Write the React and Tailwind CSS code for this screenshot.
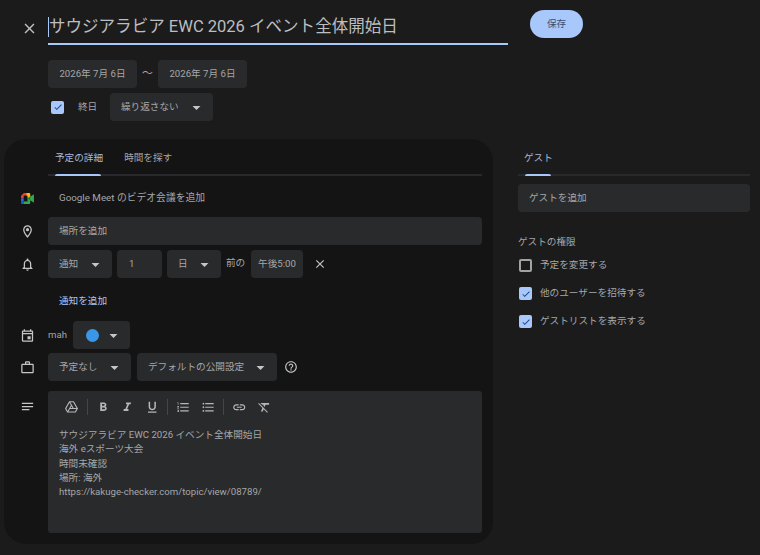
import React from "react";
import {
  MdClose, MdOutlineLocationOn, MdOutlineNotifications, MdOutlineEvent, MdOutlineWorkOutline, MdNotes,
  MdHelpOutline, MdFormatBold, MdFormatItalic, MdFormatUnderlined, MdFormatListNumbered, MdFormatListBulleted,
  MdLink, MdFormatClear, MdCheck, MdArrowDropDown,
} from "react-icons/md";

const font = { fontFamily: '"Roboto","Noto Sans CJK JP",sans-serif' };

function Box({ className = "", children }) {
  return <div className={`h-7 flex items-center rounded-[4px] bg-[#292a2c] text-[#a5a7a9] text-[9.65px] shrink-0 ${className}`}>{children}</div>;
}
function Select({ w, label, pl = "pl-[11px]" }) {
  return (
    <Box className={`${w} ${pl} justify-between pr-[7px]`}>
      <span>{label}</span>
      <MdArrowDropDown className="text-[19px] text-[#c4c6c8]" />
    </Box>
  );
}
function Check({ on }) {
  return on ? (
    <div className="w-[13px] h-[13px] rounded-[2px] bg-[#a8c7fa] flex items-center justify-center shrink-0">
      <MdCheck className="text-[10px] text-[#1c3d80]" />
    </div>
  ) : (
    <div className="w-[13px] h-[13px] rounded-[2px] border-2 border-[#a0a2a4] shrink-0" />
  );
}
function Meet() {
  return (
    <svg width="13" height="11" viewBox="0 0 14 12">
      <path d="M3 0h6v3H3v3H0V3z" fill="#ea4335" />
      <path d="M0 6h3v3H0z" fill="#1a73e8" />
      <path d="M0 9h3v3H1.2A1.2 1.2 0 0 1 0 10.8z" fill="#1967d2" />
      <path d="M3 9h6v3H3z" fill="#34a853" />
      <path d="M6 0h2.8A1.2 1.2 0 0 1 10 1.2V4.5L6 6z" fill="#fbbc04" />
      <path d="M3 3h4v6H3z" fill="#141414" />
      <path d="M7 6l3-2.6V1.5L10 4l4-2.6v9.2L10 8v2.8A1.2 1.2 0 0 1 8.8 12H8V9H7z" fill="#34a853" />
      <path d="M7 6l3-2v4z" fill="#188038" />
    </svg>
  );
}
function Row({ icon, className = "", children }) {
  return (
    <div className={`flex items-center ${className}`}>
      <div className="w-[44px] shrink-0 flex justify-center pl-[2px] text-[#c4c6c8] text-[15px]">{icon}</div>
      {children}
    </div>
  );
}
function Drive() {
  return (
    <svg width="15" height="14" viewBox="0 0 24 24" fill="none" stroke="#b5b7b9" strokeWidth="2" strokeLinejoin="round">
      <path d="M8.6 3h6.8L22 14.5 18.7 20.5H5.3L2 14.5z" />
      <path d="M8.6 3l6.6 11.5H22M5.3 20.5l6.7-11.5M8.5 14.5h6.7" strokeWidth="1.8" />
    </svg>
  );
}
function Tb({ children, className = "" }) {
  return <div className={`w-[24.5px] flex justify-center text-[#b5b7b9] text-[14.5px] ${className}`}>{children}</div>;
}
const Sep = () => <div className="w-px h-4 bg-[#444648] mx-[3px]" />;

export default function App() {
  return (
    <div style={font} className="w-[760px] h-[555px] overflow-hidden bg-[#1b1b1b] text-[#a5a7a9] relative">
      <div className="flex pt-[10px] h-[60px]">
        <div className="w-[48px] pt-[10px] pl-[21px] text-[#bfc1c3] text-[17px] shrink-0"><MdClose /></div>
        <div className="w-[460px] h-[35px] border-b-2 border-[#a8c7fa] flex items-center text-[16.55px] text-[#bcbec0] leading-none pt-[1px] whitespace-nowrap">
          <span className="w-px h-[20px] bg-[#a8c7fa]" />
          <span>サウジアラビア EWC 2026 イベント全体開始日</span>
        </div>
        <div className="ml-[22px] w-[53px] h-7 rounded-full bg-[#a8c7fa] text-[#3a4f78] text-[9.65px] flex items-center justify-center">保存</div>
      </div>

      <div className="flex items-center pl-[48px]">
        <Box className="w-[89px] justify-center">2026年 7月 6日</Box>
        <span className="w-[21px] text-center text-[11px]">〜</span>
        <Box className="w-[89px] justify-center">2026年 7月 6日</Box>
      </div>
      <div className="flex items-center pl-[51px] mt-[5px]">
        <Check on />
        <span className="ml-[14px] w-[32px] text-[9.65px]">終日</span>
        <Select w="w-[103px]" label="繰り返さない" />
      </div>

      <div className="flex mt-[18px]">
        <div className="ml-[4px] w-[489px] h-[405px] rounded-[22px] bg-[#141414] pl-0 pt-[10px]">
          <div className="ml-[44px] w-[434px] h-[27px] border-b-2 border-[#28292b] flex text-[9.65px] relative">
            <span className="ml-[7px] text-[#a8b8d8] leading-[18px]">予定の詳細</span>
            <span className="ml-[21px] leading-[18px]">時間を探す</span>
            <div className="absolute left-[7px] bottom-[-2px] w-[46px] h-[2px] rounded-t bg-[#a8c7fa]" />
          </div>
          <Row icon={<Meet />} className="h-[41px] pt-[3px]">
            <span className="pl-[11px] text-[9.8px]">Google Meet のビデオ会議を追加</span>
          </Row>
          <Row icon={<MdOutlineLocationOn />}>
            <Box className="w-[434px] pl-[11px]">場所を追加</Box>
          </Row>
          <Row icon={<MdOutlineNotifications />} className="mt-[5px]">
            <div className="flex items-center gap-[5px]">
              <Select w="w-[64px]" label="通知" />
              <Box className="w-[45px] pl-[12px]">1</Box>
              <Select w="w-[54px]" label="日" />
              <span className="text-[9.65px] w-[20px] text-[#a5a7a9] pb-[2px]">前の</span>
              <Box className="w-[52px] justify-center">午後5:00</Box>
              <MdClose className="text-[14px] ml-[5px] text-[#c4c6c8]" />
            </div>
          </Row>
          <div className="pl-[55px] h-[43px] pt-[3px] flex items-center text-[9.65px] text-[#a8c7fa]">通知を追加</div>
          <Row icon={<MdOutlineEvent />}>
            <span className="text-[9.65px] w-[25px]">mah</span>
            <Box className="w-[57px] pl-[13px] pr-[11px] justify-between">
              <span className="w-[13px] h-[13px] rounded-full bg-[#3a96e8]" />
              <MdArrowDropDown className="text-[19px] text-[#c4c6c8] -mr-1" />
            </Box>
          </Row>
          <Row icon={<MdOutlineWorkOutline />} className="mt-[4px]">
            <Select w="w-[83px]" label="予定なし" />
            <div className="ml-[6px]"><Select w="w-[140px]" label="デフォルトの公開設定" /></div>
            <MdHelpOutline className="ml-[7px] text-[14px] text-[#c4c6c8]" />
          </Row>
          <div className="flex mt-[10px]">
            <div className="w-[44px] shrink-0 pl-[16px] pt-[8px] text-[15px] text-[#c4c6c8]"><MdNotes /></div>
            <div className="w-[434px] h-[142px] bg-[#292a2c] rounded-[3px] pl-[11px]">
              <div className="flex items-center h-[32px]">
                <Tb><Drive /></Tb>
                <Sep />
                <Tb><MdFormatBold /></Tb>
                <Tb><MdFormatItalic /></Tb>
                <Tb><MdFormatUnderlined /></Tb>
                <Sep />
                <Tb><MdFormatListNumbered /></Tb>
                <Tb><MdFormatListBulleted /></Tb>
                <Sep />
                <Tb><MdLink /></Tb>
                <Tb><MdFormatClear /></Tb>
              </div>
              <div className="mt-[5px] text-[9.65px] leading-[14.3px] text-[#a5a7a9]">
                <div>サウジアラビア EWC 2026 イベント全体開始日</div>
                <div>海外 eスポーツ大会</div>
                <div>時間未確認</div>
                <div>場所: 海外</div>
                <div>https://kakuge-checker.com/topic/view/08789/</div>
              </div>
            </div>
          </div>
        </div>

        <div className="ml-[25px] w-[232px] pt-[10px]">
          <div className="h-[27px] border-b-2 border-[#28292b] relative text-[9.65px] text-[#a8b8d8] leading-[18px]">
            <span className="ml-[6px]">ゲスト</span>
            <div className="absolute left-[7px] bottom-[-2px] w-[26px] h-[2px] rounded-t bg-[#a8c7fa]" />
          </div>
          <Box className="w-[232px] mt-[8px] pl-[11px]">ゲストを追加</Box>
          <div className="mt-[23px] text-[9.65px] leading-[14px]">ゲストの権限</div>
          <div className="mt-[10px] flex flex-col gap-[15px] pl-[1px]">
            {[[false, "予定を変更する"], [true, "他のユーザーを招待する"], [true, "ゲストリストを表示する"]].map(([on, t]) => (
              <div key={t} className="flex items-center h-[13px] text-[9.65px]">
                <Check on={on} />
                <span className="ml-[8px]">{t}</span>
              </div>
            ))}
          </div>
        </div>
      </div>
    </div>
  );
}
